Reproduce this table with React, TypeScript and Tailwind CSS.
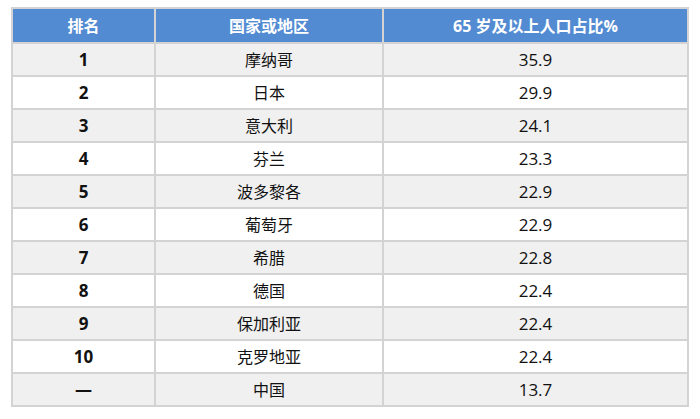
const rows: [string, string, string][] = [
  ["1", "摩纳哥", "35.9"],
  ["2", "日本", "29.9"],
  ["3", "意大利", "24.1"],
  ["4", "芬兰", "23.3"],
  ["5", "波多黎各", "22.9"],
  ["6", "葡萄牙", "22.9"],
  ["7", "希腊", "22.8"],
  ["8", "德国", "22.4"],
  ["9", "保加利亚", "22.4"],
  ["10", "克罗地亚", "22.4"],
  ["—", "中国", "13.7"],
];

export default function App() {
  return (
    <div
      className="w-[700px] h-[419px] bg-white pl-[11px] pt-[7px]"
      style={{ fontFamily: '"Open Sans", "Noto Sans CJK SC", sans-serif' }}
    >
      <table className="w-[678px] border-collapse text-[16px] text-[#111]">
        <thead>
          <tr className="h-[35px] bg-[#528bd2] text-white font-bold">
            <th className="w-[143px] border-2 border-[#d3d3d3] p-0">排名</th>
            <th className="w-[228px] border-2 border-[#d3d3d3] p-0">国家或地区</th>
            <th className="border-2 border-[#d3d3d3] p-0">65 岁及以上人口占比%</th>
          </tr>
        </thead>
        <tbody>
          {rows.map(([rank, name, pct], i) => (
            <tr key={rank} className={`h-[33px] ${i % 2 === 0 ? "bg-[#f0f0f0]" : "bg-white"}`}>
              <td className="border-2 border-[#d3d3d3] p-0 text-center font-bold text-[17px]">{rank}</td>
              <td className="border-2 border-[#d3d3d3] p-0 text-center">{name}</td>
              <td className="border-2 border-[#d3d3d3] p-0 text-center text-[17px]">{pct}</td>
            </tr>
          ))}
        </tbody>
      </table>
    </div>
  );
}
